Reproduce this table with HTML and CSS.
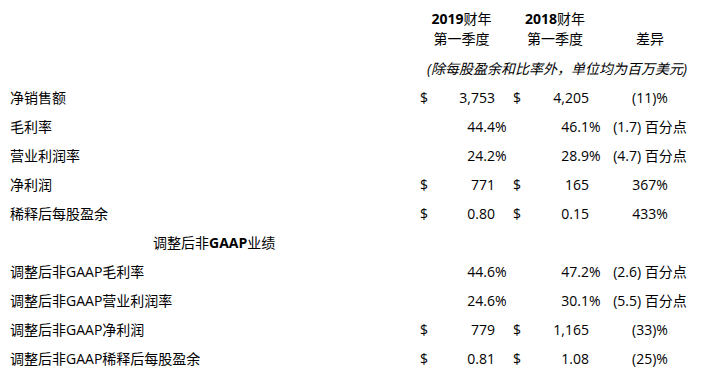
FILE: index.html
```html
<!doctype html>
<html lang="zh-CN">
<head>
  <meta charset="utf-8">
  <title>季度业绩摘要</title>
  <link rel="stylesheet" href="styles.css">
</head>
<body>

  <table class="results">
    <colgroup>
      <col class="c-label">
      <col class="c-cur">
      <col class="c-num">
      <col class="c-pct">
      <col class="c-cur2">
      <col class="c-num2">
      <col class="c-pct">
      <col class="c-diff">
    </colgroup>

    <!-- 表头 -->
    <tr class="head">
      <td></td>
      <td colspan="3" class="hd-y"><b>2019</b>财年</td>
      <td colspan="3" class="hd-y"><b>2018</b>财年</td>
      <td></td>
    </tr>
    <tr class="head">
      <td></td>
      <td colspan="3" class="hd-y">第一季度</td>
      <td colspan="3" class="hd-y">第一季度</td>
      <td class="diff">差异</td>
    </tr>
    <tr class="note">
      <td></td>
      <td colspan="7"><i>(除每股盈余和比率外，单位均为百万美元)</i></td>
    </tr>

    <!-- GAAP -->
    <tr>
      <td class="label">净销售额</td>
      <td>$</td><td class="num">3,753</td><td></td>
      <td>$</td><td class="num">4,205</td><td></td>
      <td class="diff">(11)%</td>
    </tr>
    <tr>
      <td class="label">毛利率</td>
      <td></td><td class="num">44.4</td><td>%</td>
      <td></td><td class="num">46.1</td><td>%</td>
      <td class="diff">(1.7) 百分点</td>
    </tr>
    <tr>
      <td class="label">营业利润率</td>
      <td></td><td class="num">24.2</td><td>%</td>
      <td></td><td class="num">28.9</td><td>%</td>
      <td class="diff">(4.7) 百分点</td>
    </tr>
    <tr>
      <td class="label">净利润</td>
      <td>$</td><td class="num">771</td><td></td>
      <td>$</td><td class="num">165</td><td></td>
      <td class="diff">367%</td>
    </tr>
    <tr>
      <td class="label">稀释后每股盈余</td>
      <td>$</td><td class="num">0.80</td><td></td>
      <td>$</td><td class="num">0.15</td><td></td>
      <td class="diff">433%</td>
    </tr>

    <!-- 非GAAP -->
    <tr>
      <td class="section">调整后非<b>GAAP</b>业绩</td>
      <td colspan="7"></td>
    </tr>
    <tr>
      <td class="label">调整后非GAAP毛利率</td>
      <td></td><td class="num">44.6</td><td>%</td>
      <td></td><td class="num">47.2</td><td>%</td>
      <td class="diff">(2.6) 百分点</td>
    </tr>
    <tr>
      <td class="label">调整后非GAAP营业利润率</td>
      <td></td><td class="num">24.6</td><td>%</td>
      <td></td><td class="num">30.1</td><td>%</td>
      <td class="diff">(5.5) 百分点</td>
    </tr>
    <tr>
      <td class="label">调整后非GAAP净利润</td>
      <td>$</td><td class="num">779</td><td></td>
      <td>$</td><td class="num">1,165</td><td></td>
      <td class="diff">(33)%</td>
    </tr>
    <tr>
      <td class="label">调整后非GAAP稀释后每股盈余</td>
      <td>$</td><td class="num">0.81</td><td></td>
      <td>$</td><td class="num">1.08</td><td></td>
      <td class="diff">(25)%</td>
    </tr>
  </table>

</body>
</html>
```

FILE: styles.css
```css
/* ===== 基础 ===== */
*{ box-sizing:border-box }
body{ margin:0; padding-top:9px; background:#fff; color:#000; font:14px/20px "Open Sans","Noto Sans CJK SC",sans-serif; }

.results{ border-collapse:collapse; table-layout:fixed; width:693px; }
.results td{ padding:0; white-space:nowrap; height:29px; vertical-align:middle; }

/* 列宽 */
.c-label{ width:420px }
.c-cur{ width:20px }
.c-num{ width:55px }
.c-pct{ width:18px }
.c-cur2{ width:20px }
.c-num2{ width:56px }
.c-diff{ width:86px }

/* 表头 */
.results .head td{ height:20px }
.hd-y{ text-align:center; padding-right:10px !important; }
.hd-y b{ font-weight:700 }

.results .note td{ height:34px; vertical-align:bottom; padding-bottom:4px; text-align:right; padding-right:6px; }
.note i{ font-style:italic }

.label{ padding-left:10px !important }
.section{ padding-left:153px !important }
.section b{ font-weight:700 }

.num{ text-align:right }
.diff{ text-align:center }
```
